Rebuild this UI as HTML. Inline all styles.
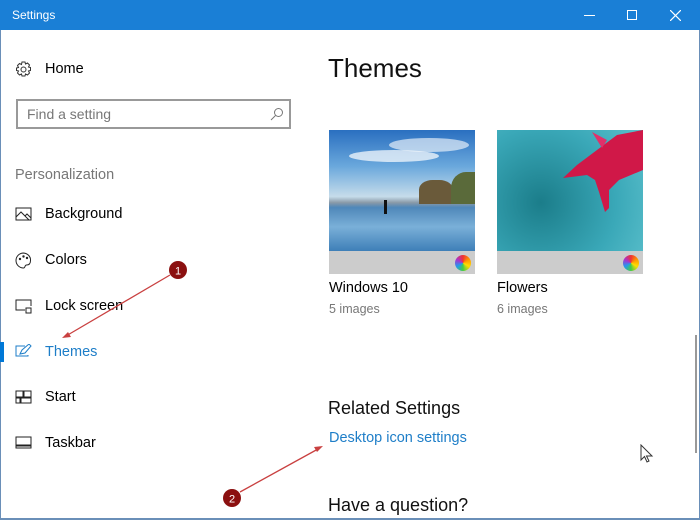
<!DOCTYPE html>
<html><head><style>
*{margin:0;padding:0;box-sizing:border-box}
body{width:700px;height:520px;overflow:hidden;background:#fff;font-family:"Liberation Sans",sans-serif;position:relative;color:#000}
.t{position:absolute;white-space:nowrap}
.nav{font-size:14.5px;left:45px}
.ic{position:absolute;left:15px}
</style></head><body>
<div style="position:absolute;left:0;top:0;width:700px;height:30px;background:#1a7fd6"></div>
<div class="t" style="left:12px;top:8px;color:#fff;font-size:12px">Settings</div>
<div style="position:absolute;left:584px;top:15px;width:11px;height:1px;background:#fff"></div>
<div style="position:absolute;left:627px;top:10px;width:10px;height:10px;border:1px solid #fff"></div>
<svg style="position:absolute;left:670px;top:10px" width="11" height="11"><path d="M0 0L11 11M11 0L0 11" stroke="#fff" stroke-width="1.2"/></svg>
<div style="position:absolute;left:0;top:30px;width:1px;height:490px;background:#6a8fb8"></div>
<div style="position:absolute;right:0;top:30px;width:1px;height:490px;background:#6a8fb8"></div>
<div style="position:absolute;left:0;top:518px;width:700px;height:2px;background:#6a8fb8"></div>
<div style="position:absolute;left:695px;top:335px;width:2px;height:118px;background:#999"></div>

<svg class="ic" style="top:61px" width="17" height="17" viewBox="0 0 17 17"><circle cx="8.5" cy="8.5" r="2.5" fill="none" stroke="#333"/><path d="M7 1h3l.5 2 2-1 2 2-1 2 2 .5v3l-2 .5 1 2-2 2-2-1-.5 2H7l-.5-2-2 1-2-2 1-2-2-.5V7l2-.5-1-2 2-2 2 1z" fill="none" stroke="#333"/></svg>
<div class="t nav" style="top:61px">Home</div>
<div style="position:absolute;left:16px;top:99px;width:275px;height:30px;border:2px solid #999"></div>
<div class="t" style="left:27px;top:106px;font-size:14px;color:#777">Find a setting</div>
<svg style="position:absolute;left:270px;top:107px" width="14" height="14"><circle cx="8.5" cy="5.5" r="4" fill="none" stroke="#777"/><path d="M5.5 8.5L1 13" stroke="#777"/></svg>
<div class="t" style="left:15px;top:167px;font-size:14.5px;color:#777">Personalization</div>

<svg class="ic" style="top:207px" width="17" height="15"><rect x="1" y="1" width="15" height="12" fill="none" stroke="#222"/><path d="M1 10l5-5 8 8M10 9l2-2 4 4" fill="none" stroke="#222"/></svg>
<div class="t nav" style="top:206px">Background</div>
<svg class="ic" style="top:252px" width="17" height="17"><path d="M8.5 1a7.5 7.5 0 1 0 0 15c2 0 1-3 3-3s4-1 4-4.5A7.5 7 0 0 0 8.5 1z" fill="none" stroke="#222"/><circle cx="5" cy="7" r="1.2" fill="#222"/><circle cx="8.5" cy="4.5" r="1.2" fill="#222"/><circle cx="12" cy="6" r="1.2" fill="#222"/></svg>
<div class="t nav" style="top:252px">Colors</div>
<svg class="ic" style="top:299px" width="17" height="15"><path d="M10 11H1V1h15v6" fill="none" stroke="#222"/><rect x="11" y="9" width="5" height="5" fill="none" stroke="#222"/></svg>
<div class="t nav" style="top:298px">Lock screen</div>
<div style="position:absolute;left:0;top:342px;width:4px;height:20px;background:#0078d7"></div>
<svg class="ic" style="top:344px" width="17" height="15"><path d="M13 11V12H1V2h9" fill="none" stroke="#1e7ec8"/><path d="M5 10l2-4 7-6 2 2-6 7z" fill="none" stroke="#1e7ec8"/></svg>
<div class="t nav" style="top:344px;color:#1e7ec8">Themes</div>
<svg class="ic" style="top:390px" width="17" height="14"><path d="M1 1h7v6H1zM9 1h7v6H9zM1 8h4v5H1zM6 8h10v5H6z" fill="none" stroke="#222"/></svg>
<div class="t nav" style="top:389px">Start</div>
<svg class="ic" style="top:436px" width="17" height="13"><rect x="1" y="1" width="15" height="11" fill="none" stroke="#222"/><path d="M1 9.5h15" stroke="#222" stroke-width="2"/></svg>
<div class="t nav" style="top:435px">Taskbar</div>

<div class="t" style="left:328px;top:53px;font-size:26px;color:#111">Themes</div>
<div style="position:absolute;left:329px;top:130px;width:146px;height:121px;overflow:hidden;background:linear-gradient(180deg,#2a6fc0 0%,#6aa8dc 30%,#c6dcea 55%,#8a9aa8 60%,#4f87b9 64%,#7ab0d8 80%,#3e7fb8 100%)">
<div style="position:absolute;left:20px;top:20px;width:90px;height:12px;border-radius:50%;background:rgba(255,255,255,.7)"></div>
<div style="position:absolute;left:60px;top:8px;width:80px;height:14px;border-radius:50%;background:rgba(255,255,255,.6)"></div>
<div style="position:absolute;left:90px;top:50px;width:34px;height:24px;background:#6a5a3a;border-radius:40% 40% 0 0"></div>
<div style="position:absolute;left:122px;top:42px;width:30px;height:32px;background:#5a6a3a;border-radius:50% 0 0 0"></div>
<div style="position:absolute;left:55px;top:70px;width:3px;height:14px;background:#111"></div>
</div>
<div style="position:absolute;left:329px;top:251px;width:146px;height:23px;background:#ccc"></div>
<div style="position:absolute;left:455px;top:255px;width:16px;height:16px;border-radius:50%;background:conic-gradient(#e33,#f90,#fd0,#4c4,#29e,#a3c,#e33)"></div>
<div style="position:absolute;left:497px;top:130px;width:146px;height:121px;overflow:hidden;background:radial-gradient(circle at 30% 60%,#1b7d8a,#3aa8b8 60%,#5cc0cc)">
<svg width="146" height="121" style="position:absolute;left:0;top:0"><path d="M146 0L120 5 100 20 80 35 66 48 90 45 98 50 102 62 108 82 112 78 112 60 122 50 146 40z" fill="#d01848"/><path d="M110 10L95 2 105 18z" fill="#e0306a"/></svg>
</div>
<div style="position:absolute;left:497px;top:251px;width:146px;height:23px;background:#ccc"></div>
<div style="position:absolute;left:623px;top:255px;width:16px;height:16px;border-radius:50%;background:conic-gradient(#e33,#f90,#fd0,#4c4,#29e,#a3c,#e33)"></div>
<div class="t" style="left:329px;top:280px;font-size:14.5px">Windows 10</div>
<div class="t" style="left:329px;top:302px;font-size:12.5px;color:#777">5 images</div>
<div class="t" style="left:497px;top:280px;font-size:14.5px">Flowers</div>
<div class="t" style="left:497px;top:302px;font-size:12.5px;color:#777">6 images</div>
<div class="t" style="left:328px;top:398px;font-size:18px;color:#111">Related Settings</div>
<div class="t" style="left:329px;top:430px;font-size:14.5px;color:#1e7ec8">Desktop icon settings</div>
<div class="t" style="left:328px;top:495px;font-size:18px;color:#111">Have a question?</div>
<svg style="position:absolute;left:640px;top:444px" width="14" height="20"><path d="M1 1v15l3.5-3.5 2.5 5.5 2-1-2.5-5H12z" fill="#fff" stroke="#333"/></svg>

<svg style="position:absolute;left:0;top:0" width="700" height="520">
<path d="M170 275L66 336" stroke="#c94040" stroke-width="1.3"/><path d="M62 338l9-1-3-5z" fill="#c94040"/>
<path d="M240 492L318 449" stroke="#c94040" stroke-width="1.3"/><path d="M323 446l-9 1 3 5z" fill="#c94040"/>
<circle cx="178" cy="270" r="9" fill="#8b1010"/><text x="178" y="274.5" font-size="11" fill="#fff" text-anchor="middle" font-family="Liberation Sans">1</text>
<circle cx="232" cy="498" r="9" fill="#8b1010"/><text x="232" y="502.5" font-size="11" fill="#fff" text-anchor="middle" font-family="Liberation Sans">2</text>
</svg>
</body></html>
